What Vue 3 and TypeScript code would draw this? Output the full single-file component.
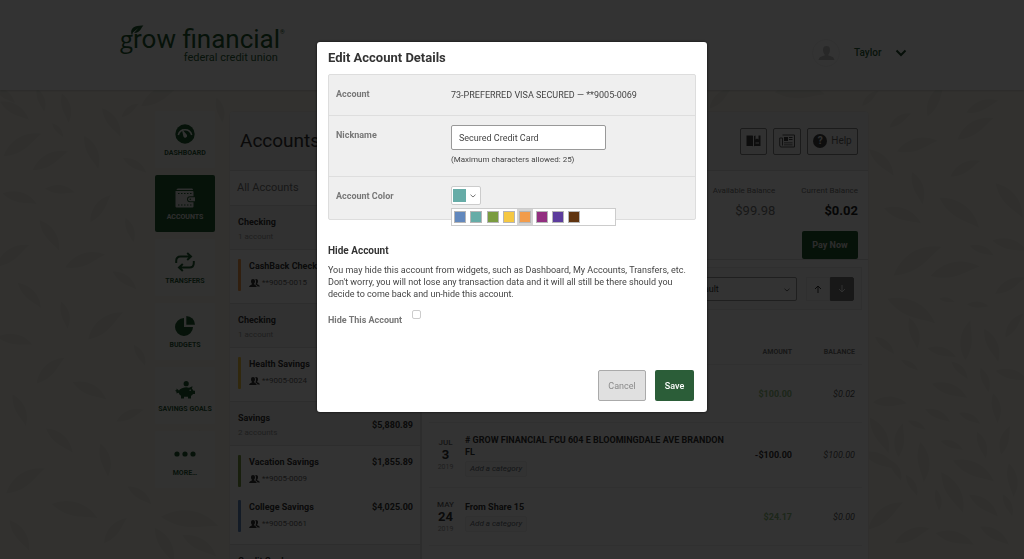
<script setup lang="ts">
import { ref } from 'vue'

interface NavItem { id: string; label: string }
interface Account { name: string; number: string; color: string; balance?: string }
interface Group { name: string; count: string; total?: string; accounts: Account[] }
interface Transaction {
  month?: string; day?: string; year?: string; title?: string
  amount?: string; kind: 'credit' | 'debit'; balance?: string
}

const nav: NavItem[] = [
  { id: 'dashboard', label: 'Dashboard' },
  { id: 'accounts', label: 'Accounts' },
  { id: 'transfers', label: 'Transfers' },
  { id: 'budgets', label: 'Budgets' },
  { id: 'goals', label: 'Savings Goals' },
  { id: 'more', label: 'More…' },
]

const groups: Group[] = [
  { name: 'Checking', count: '1 account', accounts: [{ name: 'CashBack Checking', number: '**9005-0015', color: '#f29c4b' }] },
  { name: 'Checking', count: '1 account', accounts: [{ name: 'Health Savings', number: '**9005-0024', color: '#f5c842' }] },
  {
    name: 'Savings', count: '2 accounts', total: '$5,880.89',
    accounts: [
      { name: 'Vacation Savings', number: '**9005-0009', color: '#7a9c40', balance: '$1,855.89' },
      { name: 'College Savings', number: '**9005-0061', color: '#6288bf', balance: '$4,025.00' },
    ],
  },
  { name: 'Credit Card', count: '', accounts: [] },
]

const transactions: Transaction[] = [
  { amount: '$100.00', kind: 'credit', balance: '$0.02' },
  { month: 'Jul', day: '3', year: '2019', title: '# GROW FINANCIAL FCU 604 E BLOOMINGDALE AVE BRANDON FL', amount: '-$100.00', kind: 'debit', balance: '$100.00' },
  { month: 'May', day: '24', year: '2019', title: 'From Share 15', amount: '$24.17', kind: 'credit', balance: '$0.00' },
  { title: 'Credit Card WINN-DIXIE #0737 APOLLO BEACH FL Date 05/23/19', kind: 'debit' },
]

const colors = [
  { name: 'Blue', hex: '#6288bd' },
  { name: 'Teal', hex: '#66aca7' },
  { name: 'Green', hex: '#7a9c40' },
  { name: 'Yellow', hex: '#f5c842' },
  { name: 'Orange', hex: '#f29c4b' },
  { name: 'Magenta', hex: '#922f80' },
  { name: 'Purple', hex: '#5c3c9c' },
  { name: 'Brown', hex: '#60340f' },
]
const selected = ref('#66aca7')
const hovered = ref('Orange')
const paletteOpen = ref(true)
const nickname = ref('Secured Credit Card')
const hidden = ref(false)

function pick(hex: string) {
  selected.value = hex
  paletteOpen.value = false
}

// Leaves of the backdrop: x, y, angle in degrees, length
const leaves: [number, number, number, number][] = [
  [5, 5, 40, 26], [41, 10, 75, 24], [66, 18, 80, 30], [15, 20, 35, 34], [58, 40, 55, 18], [112, 32, 60, 34],
  [92, 62, 70, 36], [22, 54, -28, 44], [60, 100, 10, 30], [130, 20, -35, 22], [135, 75, 35, 28], [20, 108, 20, 36],
  [50, 70, -25, 40], [100, 118, -50, 34], [130, 140, 75, 26], [50, 145, 60, 36], [12, 165, -30, 40], [85, 170, -15, 42], [125, 190, 40, 30],
  [30, 205, 50, 34], [65, 225, 80, 28], [105, 235, -35, 44], [15, 250, 15, 36], [140, 265, 65, 24], [50, 280, -40, 38],
  [90, 300, 30, 38], [20, 320, 70, 34], [130, 325, -20, 30], [60, 350, 45, 36], [105, 370, 80, 34], [25, 390, -30, 46],
  [140, 405, 40, 30], [75, 420, 20, 48], [115, 440, -45, 34], [20, 445, 60, 36], [190, 430, 12, 58], [165, 455, 65, 40],
  [205, 350, 65, 24], [200, 455, 35, 40], [160, 5, -25, 44], [220, 20, 80, 26], [720, 8, -40, 30], [800, 2, 5, 50],
  [870, 8, -40, 22], [935, 10, -60, 36], [982, 16, -18, 34], [900, 30, -30, 26], [975, 38, -28, 42], [917, 55, -12, 42],
  [882, 72, 50, 36], [965, 78, -25, 34], [1010, 110, 55, 44], [918, 98, 75, 34], [903, 125, 25, 40], [960, 122, 40, 50],
  [917, 170, -28, 56], [955, 180, -8, 50], [982, 160, 25, 26], [1010, 155, 20, 36], [1010, 195, -25, 34], [912, 220, 30, 54],
  [947, 210, 15, 16], [978, 215, 8, 22], [885, 255, 45, 26], [914, 243, 78, 32], [967, 250, -80, 40], [992, 255, 70, 36],
  [1014, 235, -50, 30], [910, 275, 35, 20], [942, 262, 20, 30], [960, 280, 50, 24], [985, 290, 75, 26], [1012, 285, 20, 34],
  [890, 312, 5, 34], [950, 300, 25, 38], [938, 325, 30, 28], [917, 335, 30, 20], [970, 328, 30, 24], [996, 318, 85, 30],
  [880, 345, 65, 40], [900, 350, -80, 34], [952, 355, 25, 24], [923, 372, 88, 40], [982, 355, 75, 28], [1005, 350, -70, 30],
  [880, 370, 30, 38], [974, 380, 30, 46], [1012, 390, 85, 34], [896, 380, 65, 24], [912, 395, 65, 24], [953, 402, 65, 46],
  [938, 410, 85, 22], [984, 415, 40, 36], [1008, 415, 70, 24], [885, 425, -35, 44], [912, 445, -20, 38], [955, 448, 20, 40], [995, 445, 35, 34],
]
</script>

<template>
  <div class="page">
    <header class="top">
      <div class="wrap top-inner">
        <a href="#" class="logo" aria-label="grow financial federal credit union">
          <svg class="logo-leaf" viewBox="0 0 16 13" aria-hidden="true">
            <path d="M1 11C-1 5 3 0 15 0.500C12 3 12 9 4 9.500L9 3.500L2.500 9L1.500 13Z" />
          </svg>
          <span class="logo-main"><span class="logo-g">g</span>row financial<sup>®</sup></span>
          <span class="logo-sub">federal credit union</span>
        </a>
        <button class="user" type="button">
          <span class="avatar">
            <svg viewBox="0 0 18 16" aria-hidden="true"><path d="M9 0C6 0 5 2 5.300 5C5.500 7 6.300 8.300 7 9V10.200C4 11 1 11.500 0.500 15H17.500C17 11.500 14 11 11 10.200V9C11.700 8.300 12.500 7 12.700 5C13 2 12 0 9 0Z" /></svg>
          </span>
          <span>Taylor</span>
          <svg class="user-chev" viewBox="0 0 12 8" aria-hidden="true"><path d="M1.500 1.500L6 6L10.500 1.500" /></svg>
        </button>
      </div>
    </header>

    <div class="body">
      <svg class="foliage" viewBox="0 0 1024 469" preserveAspectRatio="xMidYMin slice" aria-hidden="true">
        <path
          v-for="(l, i) in leaves" :key="i"
          d="M-0.500 0.050C-0.250 -0.180 0.150 -0.260 0.500 0C0.200 0.050 -0.050 0.240 -0.500 0.050Z"
          :transform="`translate(${l[0]} ${l[1]}) rotate(${l[2]}) scale(${l[3]})`"
        />
      </svg>

      <div class="wrap layout">
        <nav class="side">
          <a v-for="n in nav" :key="n.id" href="#" class="side-item" :class="{ active: n.id === 'accounts' }">
            <svg v-if="n.id === 'dashboard'" viewBox="0 0 20 20" aria-hidden="true">
              <circle cx="10" cy="10" r="9.700" />
              <path class="cut-line" d="M3.300 11A6.900 6.900 0 0 1 16.700 11" />
              <path class="cut" d="M6.800 5L11.600 10.500A1.900 1.900 0 1 1 8.300 12Z" />
            </svg>
            <svg v-else-if="n.id === 'accounts'" viewBox="0 0 20 20" aria-hidden="true">
              <path d="M3 0.500H17Q18 0.500 18 2H1.500Q1.500 0.500 3 0.500ZM0.500 3H17.500Q18.500 3 18.500 4V8.200H15Q12 8.200 12 11.200T15 14.200H18.500V18.500Q18.500 19.500 17.500 19.500H1.500Q0.500 19.500 0.500 18.500Z" />
              <path d="M15 9.200H20V13.200H15Q13 13.200 13 11.200T15 9.200Z" />
              <path class="stitch" d="M3 5.500H17M3 17H17" />
              <circle class="dot" cx="15.300" cy="11.200" r="0.800" />
            </svg>
            <svg v-else-if="n.id === 'transfers'" viewBox="0 0 20 20" aria-hidden="true">
              <path class="line" d="M1.200 11V9Q1.200 4.500 5.500 4.500H15.500M12.200 0.900L16 4.500L12.200 8.100M18.800 9V11Q18.800 15.500 14.500 15.500H4.500M7.800 11.900L4 15.500L7.800 19.100" />
            </svg>
            <svg v-else-if="n.id === 'budgets'" viewBox="0 0 20 20" aria-hidden="true">
              <path d="M9 2V11H18A9 9 0 1 1 9 2Z" /><path d="M11.300 0A8.700 8.700 0 0 1 20 8.700H11.300Z" />
            </svg>
            <svg v-else-if="n.id === 'goals'" viewBox="0 0 20 20" aria-hidden="true">
              <circle cx="11.200" cy="3.700" r="2.600" />
              <path d="M7 8.300Q11 6.500 14 7.700L17.500 6.300L17 8.700Q18 9.700 18.500 10.700H20V14H18Q17 15.500 16 15.700V18.500H13V16.700H9V18.500H6V15.700Q4 14.500 3.700 12.700L1.500 13.500V11.700L0 10.800L1.500 10V8.500L4 10.500Q4.500 9.300 7 8.300Z" />
              <circle class="cut" cx="15.200" cy="10.300" r="0.800" />
            </svg>
            <svg v-else viewBox="0 0 20 20" aria-hidden="true">
              <circle cx="2" cy="10" r="2.600" /><circle cx="10" cy="10" r="2.600" /><circle cx="18" cy="10" r="2.600" />
            </svg>
            <span>{{ n.label }}</span>
          </a>
        </nav>

        <main class="panel">
          <div class="panel-head">
            <h1>Accounts</h1>
            <div class="tools">
              <button type="button" class="tool" aria-label="Guide">
                <svg viewBox="0 0 15 12" aria-hidden="true"><path d="M0.500 0.500H6.500L7 1V11.500L6.500 11H0.500Z" /><path d="M8 1L9.500 0.500V4.500L11 3.500L12.500 4.500V0.500H14.500V11H8.500L8 11.500ZM9.500 7.500V8.500H13V7.500Z" /></svg>
              </button>
              <button type="button" class="tool news" aria-label="News">
                <svg viewBox="0 0 16 14" aria-hidden="true"><path class="outline" d="M3.500 1H15.500V13H2Q0.700 13 0.700 11V4H3.500V11.500" /><path d="M5 3H9V7H5ZM10 3H13.500V4H10ZM10 5H13.500V6H10ZM5 8.500H13.500V9.300H5ZM5 10.500H13.500V11.300H5Z" /></svg>
              </button>
              <button type="button" class="tool help"><span class="q">?</span>Help</button>
            </div>
          </div>

          <div class="columns">
            <section class="accounts">
              <a href="#" class="all">All Accounts</a>
              <div v-for="(g, i) in groups" :key="i" class="group">
                <div class="group-head">
                  <div><h2>{{ g.name }}</h2><p>{{ g.count }}</p></div>
                  <strong v-if="g.total">{{ g.total }}</strong>
                </div>
                <ul v-if="g.accounts.length">
                  <li v-for="a in g.accounts" :key="a.number">
                    <i class="bar" :style="{ background: a.color }"></i>
                    <div class="acct">
                      <b>{{ a.name }}</b>
                      <span>
                        <svg viewBox="0 0 11 8" aria-hidden="true"><path d="M7 0Q9.300 0 9 2.500Q8.900 4 8.200 4.500V5.200Q10.500 5.500 11 7.500H8.500Q8 6 6.400 5.400Q7.200 4 6.900 2Q6.800 0.800 6.200 0.300Z" /><path d="M4 0Q6.300 0 6 2.500Q5.900 4 5.200 4.600V5.500Q7.500 6 7.800 8H0Q0.300 6 2.800 5.500V4.600Q2.100 4 2 2.500Q1.700 0 4 0Z" /></svg>
                        {{ a.number }}
                      </span>
                    </div>
                    <strong>{{ a.balance }}</strong>
                  </li>
                </ul>
              </div>
            </section>

            <section class="detail">
              <div class="summary">
                <dl>
                  <div><dt>Available Balance</dt><dd>$99.98</dd></div>
                  <div><dt>Current Balance</dt><dd class="strong">$0.02</dd></div>
                </dl>
                <button type="button" class="pay">Pay Now</button>
              </div>

              <div class="filter">
                <div class="select-box">
                  <select aria-label="Sort by"><option>Default</option></select>
                  <svg viewBox="0 0 6 4" aria-hidden="true"><path d="M0.500 0.800L3 3L5.500 0.800" /></svg>
                </div>
                <div class="order">
                  <button type="button" aria-label="Ascending"><svg viewBox="0 0 8 8" aria-hidden="true"><path d="M4 8V1M1 4L4 1L7 4" /></svg></button>
                  <button type="button" class="on" aria-label="Descending"><svg viewBox="0 0 8 8" aria-hidden="true"><path d="M4 0V7M1 4L4 7L7 4" /></svg></button>
                </div>
              </div>

              <table>
                <thead>
                  <tr><th class="c-date"></th><th></th><th class="num">Amount</th><th class="num c-bal">Balance</th></tr>
                </thead>
                <tbody>
                  <tr v-for="(t, i) in transactions" :key="i">
                    <td class="date"><span>{{ t.month }}</span><b>{{ t.day }}</b><small>{{ t.year }}</small></td>
                    <td class="desc">
                      <template v-if="t.title"><p>{{ t.title }}</p><button type="button">Add a category</button></template>
                    </td>
                    <td class="num amount" :class="t.kind">{{ t.amount }}</td>
                    <td class="num balance">{{ t.balance }}</td>
                  </tr>
                </tbody>
              </table>
            </section>
          </div>
        </main>
      </div>
    </div>

    <div class="overlay">
      <form class="modal" role="dialog" aria-labelledby="dlg-title" @submit.prevent>
        <h2 id="dlg-title">Edit Account Details</h2>
        <div class="fields">
          <div class="field">
            <span class="label">Account</span>
            <span class="value">73-PREFERRED VISA SECURED — **9005-0069</span>
          </div>
          <div class="field nick">
            <label class="label" for="nickname">Nickname</label>
            <div>
              <input id="nickname" v-model="nickname" type="text" maxlength="25" />
              <p class="hint">(Maximum characters allowed: 25)</p>
            </div>
          </div>
          <div class="field color">
            <span id="color-label" class="label">Account Color</span>
            <div class="picker">
              <button type="button" class="current" aria-labelledby="color-label" :aria-expanded="paletteOpen" @click="paletteOpen = !paletteOpen">
                <i :style="{ background: selected }"></i>
                <svg viewBox="0 0 6 4" aria-hidden="true"><path d="M0.500 0.700L3 3L5.500 0.700" /></svg>
              </button>
              <div v-if="paletteOpen" class="palette">
                <button
                  v-for="c in colors" :key="c.name" type="button" :aria-label="c.name"
                  :class="{ hot: hovered === c.name }" @mouseenter="hovered = c.name" @click="pick(c.hex)"
                ><i :style="{ background: c.hex }"></i></button>
              </div>
            </div>
          </div>
        </div>

        <h3>Hide Account</h3>
        <p class="copy">You may hide this account from widgets, such as Dashboard, My Accounts, Transfers, etc. Don't worry, you will not lose any transaction data and it will all still be there should you decide to come back and un-hide this account.</p>
        <div class="hide">
          <label for="hide-account">Hide This Account</label>
          <input id="hide-account" v-model="hidden" type="checkbox" />
        </div>
        <div class="actions">
          <button type="button" class="cancel">Cancel</button>
          <button type="submit" class="save">Save</button>
        </div>
      </form>
    </div>
  </div>
</template>

<style>
body { overflow: hidden; }
</style>

<style scoped>
* { box-sizing: border-box; margin: 0; padding: 0; }
button, input, select { font: inherit; color: inherit; background: none; border: 0; }
a { color: inherit; text-decoration: none; }
ul { list-style: none; }
svg { display: block; flex: none; }

.page { height: 100vh; overflow: hidden; font: 9px/12px Roboto, sans-serif; color: #333; background: #f9f6ec; }
.wrap { width: 100%; max-width: 714px; margin: 0 auto; }
.top { position: relative; background: #fff; box-shadow: 0 1px 2px rgba(0, 0, 0, .15); z-index: 1; }
.top-inner { max-width: 784px; height: 90px; display: flex; justify-content: space-between; align-items: center; }
.logo { position: relative; color: #2a5e37; display: flex; flex-direction: column; align-items: flex-end; }
.logo-main { font-size: 26px; line-height: 26px; color: #1f5a30; white-space: nowrap; }
.logo-g { font-family: "Open Sans", sans-serif; font-size: 24px; }
.logo-main sup { font-size: 6px; line-height: 6px; vertical-align: 14px; }
.logo-sub { font-size: 11px; line-height: 12px; padding-right: 7px; }
.logo-leaf { position: absolute; left: 10px; top: -1px; width: 15px; height: 11px; fill: #1f5a30; }
.user { width: 102px; display: flex; align-items: center; font-size: 10px; color: #2a5e37; font-weight: 500; padding-top: 16px; margin-right: -10px; }
.avatar { width: 28px; height: 28px; border: 1px solid #f2f2f2; border-radius: 50%; display: grid; place-items: center; margin-right: 14px; flex: none; }
.avatar svg { width: 17px; height: 15px; fill: #c8c8c8; }
.user-chev { width: 12px; height: 8px; margin-left: 14px; fill: none; stroke: #1f4a2c; stroke-width: 2; }

.body { position: relative; min-height: 100%; }
.foliage { position: absolute; inset: 0; width: 100%; height: 469px; fill: #eeebe0; }
.layout { position: relative; padding-top: 21px; display: grid; grid-template-columns: 60px minmax(0, 1fr); gap: 14px; align-items: start; }
.side { display: grid; gap: 7px; }
.side-item { height: 57px; display: flex; flex-direction: column; align-items: center; padding-top: 13px; background: #fbfaf6; border-radius: 2px; font-size: 7px; line-height: 10px; font-weight: 700; text-transform: uppercase; color: #2a5e37; white-space: nowrap; }
.side-item svg { width: 20px; height: 20px; margin-bottom: 4px; fill: #1f5a30; overflow: visible; }
.side-item .cut { fill: #fbfaf6; }
.side-item .cut-line { fill: none; stroke: #fbfaf6; stroke-width: 1.500; }
.side-item .line { fill: none; stroke: #1f5a30; stroke-width: 2; }
.side-item.active { background: #22592f; color: #e6e6e6; }
.side-item.active svg { fill: #e6e6e6; }
.side-item .stitch { fill: none; stroke: #22592f; stroke-width: 1; stroke-dasharray: 1.500 1.500; }
.side-item .dot { fill: #22592f; }

.panel { background: #fff; border: 1px solid #eeece6; border-radius: 4px 4px 0 0; overflow: hidden; }
.panel-head { height: 59px; padding: 0 10px; background: #f4f4f4; border-bottom: 1px solid #e2e2e2; display: flex; align-items: center; justify-content: space-between; }
h1 { font-size: 19px; line-height: 24px; font-weight: 400; }
.tools { display: flex; gap: 6px; }
.tool { height: 27px; width: 27px; border: 1px solid #888; border-radius: 2px; display: grid; place-items: center; }
.tool svg { width: 15px; height: 12px; fill: #444; }
.tool.news { width: 28px; }
.tool.news svg { width: 16px; height: 14px; }
.tool .outline { fill: none; stroke: #555; stroke-width: 1; }
.tool.help { width: 51px; display: flex; align-items: center; justify-content: center; gap: 4px; font-size: 10px; color: #666; }
.q { width: 14px; height: 14px; border-radius: 50%; background: #444; color: #eee; font-weight: 700; line-height: 14px; }

.columns { display: grid; grid-template-columns: 192px minmax(0, 1fr); }
.accounts { border-right: 2px solid #e2e2e2; }
.all { display: flex; align-items: center; height: 34px; padding-left: 7px; font-size: 11px; color: #777; }
.group-head { height: 45px; padding: 3px 7px 0 8px; background: #f4f4f4; border: solid #e0e0e0; border-width: 1px 0; display: flex; justify-content: space-between; align-items: center; }
.group-head h2 { font-size: 9px; line-height: 15px; }
.group-head p { font-size: 8px; line-height: 14px; min-height: 14px; color: #999; }
.accounts strong { font-weight: 700; }
.group ul { padding: 9px 7px 12px 8px; display: grid; gap: 13px; }
.group li { display: flex; align-items: flex-start; height: 32px; }
.bar { width: 3px; height: 32px; border-radius: 1px; margin-right: 8px; }
.acct { flex: 1; min-width: 0; }
.acct b { display: block; line-height: 15px; white-space: nowrap; }
.acct span { display: flex; align-items: center; gap: 2px; line-height: 18px; font-size: 8px; color: #666; }
.acct svg { width: 11px; height: 8px; fill: #333; }
.group li strong { line-height: 15px; }

.summary { height: 89px; padding: 13px 10px 0; border-bottom: 1px solid #e0e0e0; display: flex; flex-direction: column; align-items: flex-end; }
.summary dl { display: flex; gap: 26px; text-align: right; color: #777; }
.summary dt { font-size: 8px; line-height: 13px; }
.summary dd { font-size: 13px; line-height: 28px; }
.summary .strong { color: #222; font-weight: 700; }
.pay { width: 56px; height: 28px; margin-top: 6px; flex: none; background: #22592f; color: #ddd; border-radius: 2px; font-weight: 700; }
.filter { margin: 7px 6px 0; height: 43px; padding: 0 7px; background: #f8f8f8; border: 1px solid #eaeaea; display: flex; align-items: center; justify-content: flex-end; gap: 9px; }
.select-box { position: relative; width: 116px; }
.select-box select { appearance: none; width: 100%; height: 24px; border: 1px solid #999; border-radius: 2px; padding-left: 8px; background: #fff; }
.select-box svg { position: absolute; right: 7px; top: 11px; width: 6px; height: 4px; fill: none; stroke: #666; }
.order { display: flex; }
.order button { width: 24px; height: 24px; display: grid; place-items: center; border: 1px solid #e8e8e8; }
.order svg { width: 8px; height: 8px; fill: none; stroke: #333; }
.order .on { background: #777; border-color: #777; border-radius: 0 2px 2px 0; }
.order .on svg { stroke: #eee; }

table { width: calc(100% - 13px); margin: 30px 6px 0 7px; border-collapse: collapse; table-layout: fixed; }
th { height: 24px; font-size: 7px; line-height: 10px; color: #777; text-transform: uppercase; }
.c-date { width: 36px; }
th:nth-child(3) { width: 66px; }
.c-bal { width: 64px; }
th, td { border-bottom: 1px solid #eee; }
td { height: 58px; padding: 11px 0 10px; vertical-align: middle; }
.num { text-align: right; }
.num.balance, .c-bal { padding-right: 7px; }
.num:nth-child(3) { padding-right: 6px; }
.date { text-align: center; padding-right: 3px; }
.date span { display: block; font-size: 8px; font-weight: 500; line-height: 11px; text-transform: uppercase; color: #666; }
.date b { display: block; font-size: 13px; line-height: 14px; }
.date small { display: block; font-size: 7px; line-height: 11px; color: #999; }
.desc p { width: 264px; font-weight: 700; margin-bottom: 3px; }
.desc button { display: block; height: 16px; padding: 0 4px; border: 1px solid #f0f0f0; border-radius: 2px; background: #f7f8f8; font-size: 8px; line-height: 14px; font-style: italic; color: #666e76; }
.amount { font-weight: 700; }
.amount.credit { color: #8fc080; }
.balance { font-style: italic; color: #555; }

.overlay { position: fixed; inset: 0; z-index: 2; background: rgba(0, 0, 0, .8); padding: 42px 16px; }
.modal { width: 100%; max-width: 390px; margin: 0 auto; padding: 8px 11px 11px; background: #fff; border-radius: 3px; box-shadow: 0 0 3px rgba(0, 0, 0, .8); color: #444; }
.modal h2 { font-size: 13px; line-height: 16px; color: #333; }
.fields { margin-top: 8px; background: #efefef; border: 1px solid #ddd; border-radius: 2px; }
.field { display: grid; grid-template-columns: 115px minmax(0, 1fr); padding: 0 7px; }
.field + .field { border-top: 1px solid #dedede; }
.label { font-weight: 700; color: #777; line-height: 12px; padding-top: 13px; }
.value { padding: 14px 0; }
.nick { height: 61px; }
.nick input { display: block; margin-top: 9px; width: 155px; height: 25px; padding: 0 7px; border: 1px solid #999; border-radius: 2px; background: #fff; }
.hint { font-size: 8px; margin-top: 4px; }
.color { height: 43px; }
.picker { position: relative; padding-top: 9px; }
.current { width: 30px; height: 19px; padding: 0 4px 0 1px; border: 1px solid #ccc; border-radius: 2px; background: #fff; display: flex; align-items: center; justify-content: space-between; }
.current i { width: 13px; height: 13px; }
.current svg { width: 6px; height: 4px; fill: none; stroke: #777; }
.palette { position: absolute; left: 0; top: 31px; width: 165px; height: 18px; border: 1px solid #ccc; background: #fff; display: grid; grid-template-columns: repeat(10, 1fr); }
.palette button { display: grid; place-items: center; }
.palette .hot { background: #d3d3d3; }
.palette i { width: 12px; height: 12px; border: 1px solid #b5b5b5; }
.modal h3 { margin-top: 24px; font-size: 10px; line-height: 14px; color: #333; }
.copy { margin-top: 6px; }
.hide { display: flex; align-items: flex-start; gap: 10px; margin-top: 10px; }
.hide label { font-weight: 700; color: #777; padding-top: 4px; }
.hide input { appearance: none; width: 9px; height: 9px; border: 1px solid #ccc; border-radius: 2px; background: #fff; }
.actions { display: flex; justify-content: flex-end; gap: 9px; margin-top: 44px; padding-right: 2px; }
.actions button { height: 31px; border-radius: 2px; }
.cancel { width: 48px; border: 1px solid #aaa; background: #e0e0e0; color: #8a8a8a; }
.save { width: 39px; background: #2b5d38; color: #fff; font-weight: 500; }
</style>
